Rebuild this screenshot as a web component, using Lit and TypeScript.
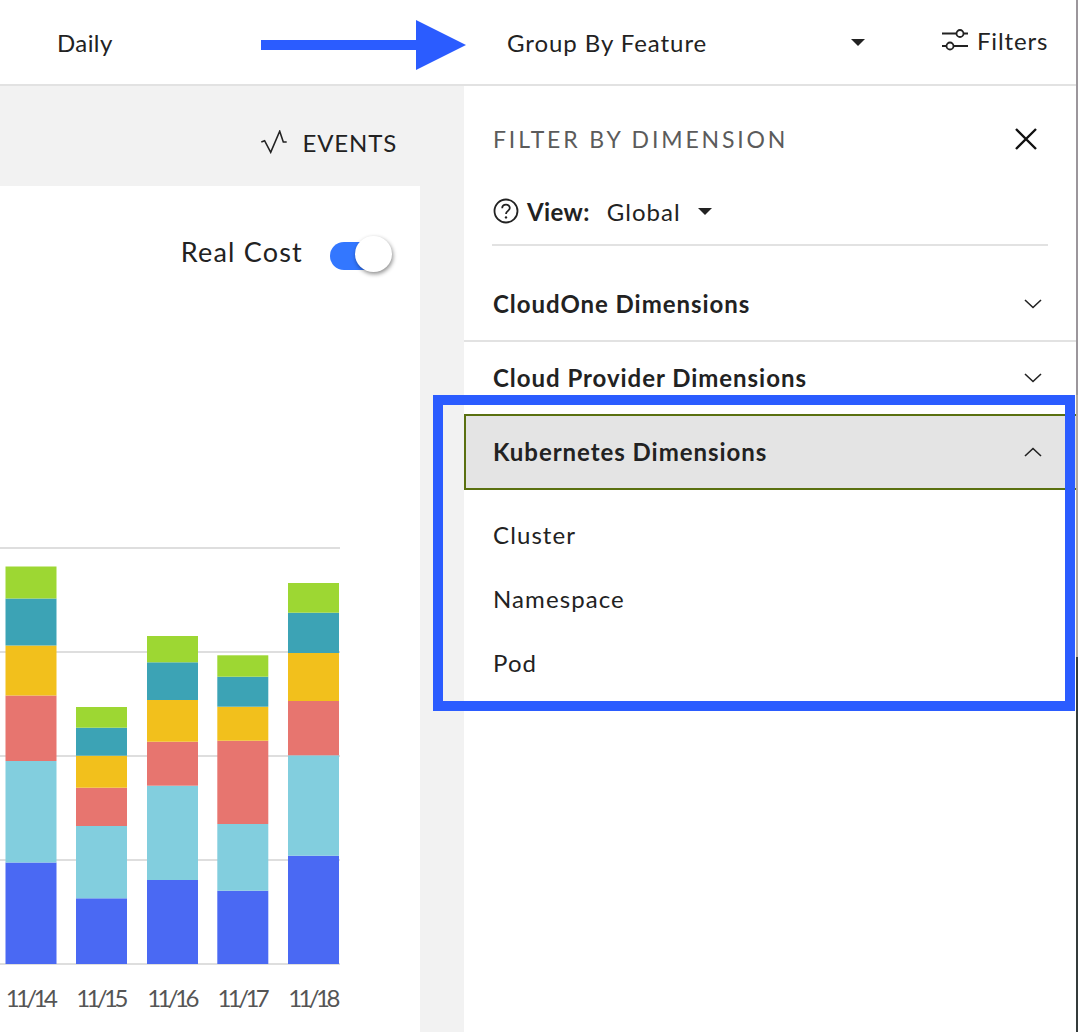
import { LitElement, html, css, svg } from "lit";
import { customElement } from "lit/decorators.js";

const COLORS = ["#4a69f3", "#82cede", "#e7756f", "#f2c01c", "#3ca3b5", "#9dd733"];
const BARS = [
  { x: 5.5, label: "11/14", y: [566.5, 598.5, 645.5, 695.5, 761, 862.5, 964] },
  { x: 76, label: "11/15", y: [707, 727.7, 755.7, 787.7, 826, 898.3, 964] },
  { x: 147, label: "11/16", y: [636, 662.3, 700, 741.7, 785.7, 880, 964] },
  { x: 217.3, label: "11/17", y: [655.3, 676.7, 706.7, 740.7, 824, 890.7, 964] },
  { x: 288, label: "11/18", y: [583, 612.7, 653, 701, 755.3, 855.7, 964] },
];
const CHART_TOP = 186;

@customElement("app-root")
export class AppRoot extends LitElement {
  static styles = css`
    :host {
      display: block;
      width: 1078px;
      height: 1032px;
      overflow: hidden;
      position: relative;
      background: #fff;
      font-family: "Lato", "Liberation Sans", sans-serif;
      color: #222;
      font-size: 24px;
    }
    .page {
      display: flex; flex-direction: column; height: 1032px; box-sizing: border-box;
      border-right: 2px solid #9b969b;
      border-image: linear-gradient(to bottom, #9b969b 0 395px, #b3a8a0 395px 657px, #343b3b 657px 1032px) 1;
    }
    .header {
      height: 86px; flex: none; box-sizing: border-box; border-bottom: 2px solid #e2e2e2;
      display: flex; align-items: center;
    }
    .daily { margin-left: 57px; width: 450px; letter-spacing: 0.4px; }
    .group { display: flex; align-items: center; letter-spacing: 0.94px; }
    .group span { width: 344px; }
    .filters { display: flex; align-items: center; gap: 9px; margin-top: -4px; letter-spacing: 0.85px; margin-left: 77px; }
    .caret { width: 0; height: 0; border-left: 7px solid transparent; border-right: 7px solid transparent; border-top: 7px solid #222; }
    .main { flex: 1; display: flex; min-height: 0; }
    .left { width: 464px; flex: none; background: #f2f2f2; display: flex; flex-direction: column; }
    .toolbar { height: 100px; flex: none; display: flex; align-items: center; justify-content: flex-end; padding: 12px 67px 0 0; gap: 15px; box-sizing: border-box; }
    .events { letter-spacing: 0.85px; }
    .card { width: 420px; flex: 1; background: #fff; position: relative; }
    .realcost { position: relative; display: flex; justify-content: flex-end; align-items: flex-start; gap: 27px; padding: 56px 27px 0 0; font-size: 27px; letter-spacing: 1.2px; }
    .realcost span { margin-top: -7px; }
    .toggle { position: relative; width: 63px; height: 28px; }
    .toggle .track { position: absolute; left: 0; top: 0; width: 48px; height: 28px; border-radius: 14px; background: #3377ff; }
    .toggle .knob { position: absolute; left: 25px; top: -6px; width: 37px; height: 36px; border-radius: 50%; background: #fff; box-shadow: 1px 2px 4px rgba(0,0,0,.45); }
    .chart { position: absolute; left: 0; top: 0; }
    .chart text { font-family: "Lato", "Liberation Sans", sans-serif; font-size: 24px; fill: #555; letter-spacing: -3.6px; }
    .panel { flex: 1; display: flex; flex-direction: column; }
    .ptitle { display: flex; justify-content: space-between; align-items: center; height: 108px; padding: 0 38px 2px 29px; box-sizing: border-box; }
    .ptitle span { color: #5b5b5b; letter-spacing: 2.86px; font-size: 23px; }
    .view { display: flex; align-items: center; margin: 0 28px; height: 34px; padding-bottom: 16px; border-bottom: 2px solid #e2e2e2; }
    .view b { font-weight: 700; margin-left: 8px; letter-spacing: 0.4px; }
    .view .g { margin-left: 17px; letter-spacing: 1px; }
    .view .caret { margin-left: 17px; }
    .row { display: flex; justify-content: space-between; align-items: center; box-sizing: border-box; padding: 0 34px 0 29px; font-weight: 700; letter-spacing: 0.96px; }
    .row span { margin-bottom: 2px; }
    .r1 { height: 96px; padding-top: 22px; border-bottom: 2px solid #e2e2e2; }
    .r2 { height: 72px; }
    .r3 { height: 76px; background: #e4e4e4; border: 2px solid #5a7010; border-right: none; padding-left: 27px; }
    .items { padding-top: 12px; }
    .item { height: 64px; display: flex; align-items: center; padding-left: 29px; letter-spacing: 1.1px; }
    .annot { position: absolute; left: 433px; top: 395px; width: 642px; height: 316px; box-sizing: border-box; border: 10px solid #2b5cff; pointer-events: none; }
    .arrow { position: absolute; left: 261px; top: 20px; }
  `;

  private chevron(up: boolean) {
    return html`<svg width="18" height="10" viewBox="0 0 18 10" fill="none" stroke="#222" stroke-width="1.6">
      <path d=${up ? "M1 9L9 1.5L17 9" : "M1 1L9 8.5L17 1"}></path></svg>`;
  }

  render() {
    return html`
      <div class="page">
        <header class="header">
          <div class="daily">Daily</div>
          <div class="group"><span>Group By Feature</span><i class="caret"></i></div>
          <div class="filters">
            <svg width="26" height="24" viewBox="0 0 26 24" fill="none" stroke="#222" stroke-width="1.8">
              <path d="M0 5.5H14.5M21.5 5.5H26M0 18H4.5M11.5 18H26"></path>
              <circle cx="18" cy="5.5" r="3.5"></circle><circle cx="8" cy="18" r="3.5"></circle>
            </svg>
            Filters
          </div>
        </header>
        <div class="main">
          <section class="left">
            <div class="toolbar">
              <svg width="27" height="24" viewBox="0 0 27 24" fill="none" stroke="#222" stroke-width="1.6">
                <path d="M1.3 12L4.6 10.7L10.7 22.3L19.7 1.3L23.3 12L26.7 12"></path>
              </svg>
              <span class="events">EVENTS</span>
            </div>
            <div class="card">
              <svg class="chart" width="420" height="846" viewBox="0 ${CHART_TOP} 420 846">
                ${[548, 652, 756, 860, 964].map((y) => svg`<rect x="0" y=${y - 1} width="340" height="2" fill="#dedede"></rect>`)}
                ${BARS.map((b) => svg`
                  ${COLORS.map((c, i) => svg`<rect x=${b.x} y=${b.y[5 - i]} width="51" height=${b.y[6 - i] - b.y[5 - i]} fill=${c}></rect>`)}
                  <text x=${b.x + 24.5} y="1007" text-anchor="middle">${b.label}</text>
                `)}
              </svg>
              <div class="realcost">
                <span>Real Cost</span>
                <div class="toggle"><div class="track"></div><div class="knob"></div></div>
              </div>
            </div>
          </section>
          <aside class="panel">
            <div class="ptitle">
              <span>FILTER BY DIMENSION</span>
              <svg width="24" height="24" viewBox="0 0 24 24" fill="none" stroke="#111" stroke-width="2.4"><path d="M2 2L22 22M22 2L2 22"></path></svg>
            </div>
            <div class="view">
              <svg style="margin-left:1px" width="26" height="26" viewBox="0 0 26 26" fill="none" stroke="#222" stroke-width="1.8">
                <circle cx="13" cy="13" r="11.5"></circle>
                <path d="M9.2 10.2C9.2 5.6 16.8 5.6 16.8 10C16.8 13 13 12.8 13 16"></path>
                <circle cx="13" cy="19.4" r="1.2" fill="#222" stroke="none"></circle>
              </svg>
              <b>View:</b><span class="g">Global</span><i class="caret"></i>
            </div>
            <div class="row r1"><span>CloudOne Dimensions</span>${this.chevron(false)}</div>
            <div class="row r2"><span>Cloud Provider Dimensions</span>${this.chevron(false)}</div>
            <div class="row r3"><span>Kubernetes Dimensions</span>${this.chevron(true)}</div>
            <div class="items">
              <div class="item">Cluster</div>
              <div class="item">Namespace</div>
              <div class="item">Pod</div>
            </div>
          </aside>
        </div>
      </div>
      <svg class="arrow" width="205" height="50" viewBox="0 0 205 50"><path d="M0 20H155V0L205 25L155 50V30H0Z" fill="#2b5cff"></path></svg>
      <div class="annot"></div>
    `;
  }
}
